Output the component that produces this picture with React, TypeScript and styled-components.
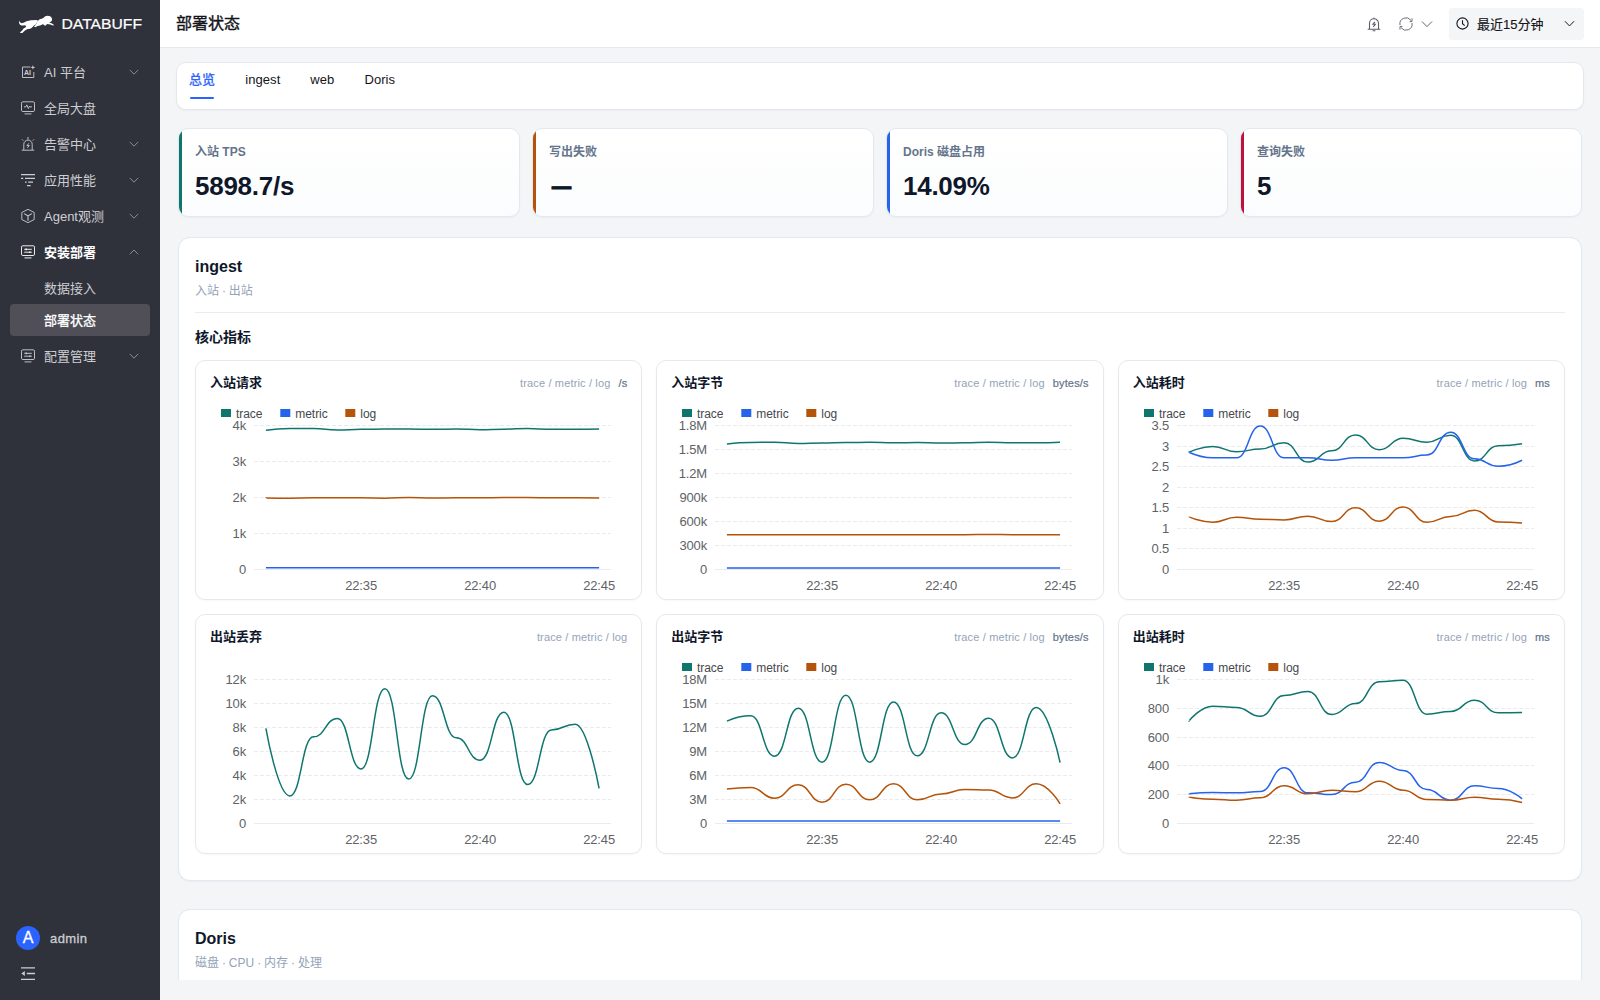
import React from "react";
import styled, { createGlobalStyle } from "styled-components";

const SANS = '"Liberation Sans", "Noto Sans CJK SC", sans-serif';

const GlobalStyle = createGlobalStyle`
  *, *::before, *::after { box-sizing: border-box; }
  html, body { margin: 0; padding: 0; }
  body {
    font-family: ${SANS};
    font-size: 13px;
    color: #0f172a;
    background: #f4f5f7;
    overflow: hidden;
  }
`;

/* ---------- shell ---------- */

const Shell = styled.div`
  display: flex;
  width: 1600px;
  height: 1000px;
  overflow: hidden;
`;

const Sidebar = styled.aside`
  flex: 0 0 160px;
  display: flex;
  flex-direction: column;
  background: #2f323b;
  color: #cdced2;
`;

const Brand = styled.div`
  height: 48px;
  padding: 8px 0 0 18px;
`;

const Nav = styled.nav`
  flex: 1;
  display: flex;
  flex-direction: column;
  padding: 6px 10px 0;
`;

const NavItem = styled.a<{ $open?: boolean }>`
  display: flex;
  align-items: center;
  height: 36px;
  padding: 0 11px 0 10px;
  font-size: 13px;
  line-height: 20px;
  font-weight: ${(p) => (p.$open ? 700 : 400)};
  color: ${(p) => (p.$open ? "#ffffff" : "#cdced2")};

  & > svg:first-child {
    flex: none;
    width: 16px;
    height: 16px;
    margin-right: 8px;
  }
  & > svg:last-child {
    color: #8b8d95;
  }
`;

const NavLabel = styled.span`
  flex: 1;
  padding-top: 2px;
  white-space: nowrap;
`;

const SubList = styled.div`
  display: flex;
  flex-direction: column;
  padding: 2px 0;
`;

const SubItem = styled.a<{ $active?: boolean }>`
  display: flex;
  align-items: center;
  height: 32px;
  padding: 0 0 2px 34px;
  border-radius: 4px;
  font-size: 13px;
  color: ${(p) => (p.$active ? "#ffffff" : "#cdced2")};
  background: ${(p) => (p.$active ? "#504f58" : "transparent")};
  -webkit-text-stroke: ${(p) => (p.$active ? "0.3px currentColor" : "0")};
`;

const UserRow = styled.div`
  display: flex;
  align-items: center;
  gap: 10px;
  height: 24px;
  margin: 0 16px 16px;
  font-size: 13px;
  letter-spacing: 0.4px;
  -webkit-text-stroke: 0.3px currentColor;
`;

const Avatar = styled.span`
  display: flex;
  align-items: center;
  justify-content: center;
  width: 24px;
  height: 24px;
  border-radius: 50%;
  background: #2b63ff;
  color: #fff;
  font-size: 16px;
  letter-spacing: 0;
`;

const Collapse = styled.div`
  height: 34px;
  padding-left: 20px;
  color: #cdced2;
`;

const Main = styled.main`
  flex: 1;
  min-width: 0;
  display: flex;
  flex-direction: column;
  padding-bottom: 20px;
`;

const Header = styled.header`
  flex: 0 0 48px;
  display: flex;
  align-items: center;
  padding: 0 16px;
  background: #fff;
  border-bottom: 1px solid #e8e9ec;
`;

const PageTitle = styled.h1`
  flex: 1;
  margin: 0;
  padding-top: 1px;
  font-size: 16px;
  line-height: 24px;
  font-weight: 400;
  color: #14151a;
  -webkit-text-stroke: 0.4px currentColor;
`;

const HeaderTools = styled.div`
  display: flex;
  align-items: center;
  color: #5c5e66;
`;

const ToolIcon = styled.span<{ $gap: number }>`
  display: flex;
  margin-right: ${(p) => p.$gap}px;
`;

const TimePicker = styled.button`
  display: flex;
  align-items: center;
  width: 135px;
  height: 32px;
  padding: 0 9px 0 7px;
  border: 0;
  border-radius: 4px;
  background: #f4f5f7;
  font-family: inherit;
  font-size: 13px;
  color: #14151a;

  span {
    flex: 1;
    padding: 0 0 1px 7px;
    text-align: left;
    -webkit-text-stroke: 0.15px currentColor;
  }
`;

const Scroll = styled.div`
  flex: 1;
  min-height: 0;
  overflow: hidden;
  padding: 14px 16px 0;
`;

/* ---------- tabs ---------- */

const TabBar = styled.div`
  display: flex;
  gap: 30px;
  height: 48px;
  padding: 0 12px;
  border: 1px solid #e5e9ef;
  border-radius: 10px;
  background: #fff;
  box-shadow: 0 1px 2px rgba(15, 23, 42, 0.04);
`;

const Tab = styled.a<{ $active?: boolean }>`
  display: flex;
  flex-direction: column;
  height: 37px;
  padding-top: 7px;
  font-size: 13px;
  line-height: 20px;
  letter-spacing: 0.08px;
  color: ${(p) => (p.$active ? "#2b63ff" : "#14151a")};
  -webkit-text-stroke: ${(p) => (p.$active ? "0.35px currentColor" : "0")};

  &::after {
    content: "";
    width: 24px;
    height: 2px;
    margin: 7px auto 0;
    border-radius: 1px;
    background: ${(p) => (p.$active ? "#2b63ff" : "transparent")};
  }
`;

/* ---------- summary cards ---------- */

const Content = styled.div`
  padding: 18px 2px 0;
`;

const KpiGrid = styled.div`
  display: grid;
  grid-template-columns: repeat(4, 1fr);
  gap: 12px;
  margin-bottom: 20px;
`;

const KpiCard = styled.div<{ $accent: string }>`
  position: relative;
  height: 89px;
  padding: 13px 16px 0;
  border: 1px solid #e2e8f0;
  border-radius: 10px;
  overflow: hidden;
  background: linear-gradient(180deg, #ffffff 0%, #fbfcfd 100%);
  box-shadow: 0 1px 2px rgba(15, 23, 42, 0.04);

  &::before {
    content: "";
    position: absolute;
    inset: 0 auto 0 0;
    width: 3px;
    background: ${(p) => p.$accent};
  }
`;

const KpiLabel = styled.div`
  font-size: 12px;
  line-height: 20px;
  font-weight: 600;
  color: #64748b;
`;

const KpiValue = styled.div`
  margin-top: 8px;
  font-size: 26px;
  line-height: 32px;
  font-weight: 700;
  letter-spacing: -0.01em;
  color: #0f172a;
`;

const EmptyValue = styled.span`
  display: block;
  padding-left: 2px;
  font-family: "Open Sans", sans-serif;
  font-size: 21px;
  -webkit-text-stroke: 0.8px currentColor;
`;

/* ---------- sections ---------- */

const Section = styled.section`
  margin-bottom: 28px;
  padding: 15px 16px 26px;
  border: 1px solid #e2e8f0;
  border-radius: 12px;
  background: #fff;
  box-shadow: 0 1px 2px rgba(15, 23, 42, 0.04);
`;

const SectionHead = styled.div`
  height: 60px;
  border-bottom: 1px solid #e9edf2;
`;

const SectionTitle = styled.h2`
  margin: 0;
  padding-top: 1px;
  font-size: 16px;
  line-height: 26px;
  font-weight: 700;
`;

const SectionNote = styled.div`
  margin-top: 1px;
  font-size: 12px;
  line-height: 20px;
  word-spacing: -0.4px;
  color: #94a3b8;
`;

const GroupTitle = styled.h3`
  margin: 14px 0 13px;
  font-size: 14px;
  line-height: 20px;
  font-weight: 700;
`;

const ChartGrid = styled.div`
  display: grid;
  grid-template-columns: repeat(3, 1fr);
  gap: 14px;
`;

const Card = styled.article`
  height: 240px;
  padding: 12px 14px 0;
  border: 1px solid #e5e9ef;
  border-radius: 10px;
  background: #fff;
  box-shadow: 0 1px 2px rgba(15, 23, 42, 0.03);
`;

const CardHead = styled.div`
  display: flex;
  align-items: center;
  height: 20px;
  margin-bottom: 7px;
`;

const CardTitle = styled.h4`
  flex: 1;
  margin: 0;
  font-size: 13px;
  line-height: 20px;
  font-weight: 700;
`;

const CardMeta = styled.span<{ $unit?: boolean }>`
  margin-left: ${(p) => (p.$unit ? 8 : 0)}px;
  font-size: 11px;
  letter-spacing: 0.15px;
  line-height: 16px;
  color: ${(p) => (p.$unit ? "#64748b" : "#94a3b8")};
  -webkit-text-stroke: ${(p) => (p.$unit ? "0.2px currentColor" : "0")};
`;

const Plot = styled.svg`
  display: block;
  width: 417px;
  height: 198px;
  overflow: visible;
  font-family: ${SANS};

  .axis { font-size: 13px; fill: #606266; letter-spacing: -0.15px; }
  .legend { font-size: 12px; fill: #46484d; letter-spacing: -0.05px; }
`;

/* ---------- chart ---------- */

const TEAL = "#0f766e";
const BLUE = "#2563eb";
const ORANGE = "#b45309";

const PLOT_LEFT = 44;
const PLOT_RIGHT = 401;
const PLOT_TOP = 25.5;
const PLOT_BOTTOM = 169.5;
const STEP = (PLOT_RIGHT - PLOT_LEFT) / 15;

type Pt = [number, number];

/* Bezier smoothing that stays monotone between samples: tangents are level at each inner point. */
function smoothPath(pts: Pt[], smooth = 0.5): string {
  const last = pts.length - 1;
  let d = `M${pts[0][0]} ${pts[0][1]}`;
  for (let i = 1; i <= last; i++) {
    const [px, py] = pts[i - 1];
    const [x, y] = pts[i];
    const reach = (x - px) * smooth;
    const c0x = i === 1 ? px : px + reach;
    const c1x = i === last ? x : x - reach;
    d += `C${[c0x, py, c1x, y, x, y].map((v) => v.toFixed(2)).join(" ")}`;
  }
  return d;
}

interface Series {
  color: string;
  data: number[];
}

interface ChartSpec {
  title: string;
  unit?: string;
  legend: boolean;
  max: number;
  ticks: string[];
  series: Series[];
}

const LEGEND = [
  { name: "trace", color: TEAL, x: 11 },
  { name: "metric", color: BLUE, x: 70.3 },
  { name: "log", color: ORANGE, x: 135.3 },
];

const TIMES = [
  { label: "22:35", index: 4 },
  { label: "22:40", index: 9 },
  { label: "22:45", index: 14 },
];

const flat = (v: number) => Array<number>(15).fill(v);

const charts: ChartSpec[] = [
  {
    title: "入站请求",
    unit: "/s",
    legend: true,
    max: 4000,
    ticks: ["0", "1k", "2k", "3k", "4k"],
    series: [
      { color: TEAL, data: [3870, 3915, 3920, 3875, 3893, 3905, 3905, 3893, 3900, 3885, 3898, 3915, 3895, 3895, 3905] },
      { color: BLUE, data: flat(48) },
      { color: ORANGE, data: [1988, 1982, 1990, 1990, 1990, 1982, 2000, 1984, 1990, 1990, 1998, 1998, 1990, 1990, 1986] },
    ],
  },
  {
    title: "入站字节",
    unit: "bytes/s",
    legend: true,
    max: 1.8,
    ticks: ["0", "300k", "600k", "900k", "1.2M", "1.5M", "1.8M"],
    series: [
      { color: TEAL, data: [1.57, 1.588, 1.592, 1.574, 1.582, 1.587, 1.591, 1.583, 1.587, 1.58, 1.583, 1.592, 1.585, 1.584, 1.591] },
      { color: BLUE, data: flat(0.02) },
      { color: ORANGE, data: [0.434, 0.434, 0.434, 0.434, 0.434, 0.434, 0.434, 0.434, 0.434, 0.434, 0.434, 0.438, 0.434, 0.434, 0.434] },
    ],
  },
  {
    title: "入站耗时",
    unit: "ms",
    legend: true,
    max: 3.5,
    ticks: ["0", "0.5", "1", "1.5", "2", "2.5", "3", "3.5"],
    series: [
      { color: TEAL, data: [2.85, 2.99, 2.86, 2.93, 3.08, 2.61, 2.885, 3.27, 2.91, 3.19, 3.095, 3.265, 2.64, 3.005, 3.055] },
      { color: BLUE, data: [2.85, 2.715, 2.715, 3.485, 2.715, 2.715, 2.655, 2.715, 2.715, 2.715, 2.78, 3.335, 2.69, 2.51, 2.655] },
      { color: ORANGE, data: [1.28, 1.15, 1.27, 1.22, 1.205, 1.295, 1.165, 1.5, 1.175, 1.52, 1.15, 1.29, 1.44, 1.155, 1.13] },
    ],
  },
  {
    title: "出站丢弃",
    legend: false,
    max: 12,
    ticks: ["0", "2k", "4k", "6k", "8k", "10k", "12k"],
    series: [
      { color: TEAL, data: [7.92, 2.3, 7.22, 8.75, 4.55, 11.22, 3.7, 10.64, 7.14, 5.28, 9.28, 3.25, 7.8, 8.28, 2.92] },
    ],
  },
  {
    title: "出站字节",
    unit: "bytes/s",
    legend: true,
    max: 18,
    ticks: ["0", "3M", "6M", "9M", "12M", "15M", "18M"],
    series: [
      { color: TEAL, data: [12.8, 13.46, 8.42, 14.42, 7.67, 16.04, 7.67, 15.2, 8.46, 13.83, 9.87, 13.17, 8.2, 14.5, 7.6] },
      { color: BLUE, data: flat(0.3) },
      { color: ORANGE, data: [4.3, 4.5, 3.17, 4.83, 2.67, 4.92, 2.96, 4.96, 2.96, 3.7, 4.25, 4.18, 3.2, 4.96, 2.45] },
    ],
  },
  {
    title: "出站耗时",
    unit: "ms",
    legend: true,
    max: 1000,
    ticks: ["0", "200", "400", "600", "800", "1k"],
    series: [
      { color: TEAL, data: [711, 815, 806, 745, 889, 917, 757, 833, 984, 995, 759, 778, 856, 769, 771] },
      { color: BLUE, data: [206, 215, 213, 222, 387, 213, 201, 287, 424, 368, 236, 162, 262, 243, 171] },
      { color: ORANGE, data: [183, 169, 162, 178, 262, 206, 231, 220, 294, 231, 167, 162, 183, 169, 146] },
    ],
  },
];

function LineChart({ spec }: { spec: ChartSpec }) {
  const height = PLOT_BOTTOM - PLOT_TOP;
  const cx = (i: number) => PLOT_LEFT + STEP * (i + 0.5);
  return (
    <Plot viewBox="0 0 417 198">
      {spec.ticks.map((t, i) => {
        const y = Math.round(PLOT_BOTTOM - (height * i) / (spec.ticks.length - 1) - 0.5) + 0.5;
        return (
          <g key={t}>
            <line
              x1={PLOT_LEFT}
              x2={PLOT_RIGHT}
              y1={y}
              y2={y}
              stroke="#e9ebee"
              strokeDasharray={i === 0 ? undefined : "4 2"}
            />
            <text className="axis" x={36} y={y + 4.6} textAnchor="end">
              {t}
            </text>
          </g>
        );
      })}
      {TIMES.map((t) => (
        <text key={t.label} className="axis" x={cx(t.index)} y={190.3} textAnchor="middle">
          {t.label}
        </text>
      ))}
      {spec.legend &&
        LEGEND.map((l) => (
          <g key={l.name}>
            <rect x={l.x} y={9} width={10} height={8} fill={l.color} />
            <text className="legend" x={l.x + 15} y={17.5}>
              {l.name}
            </text>
          </g>
        ))}
      {spec.series.map((s) => (
        <path
          key={s.color}
          d={smoothPath(s.data.map((v, i) => [cx(i), PLOT_BOTTOM - (v / spec.max) * height] as Pt))}
          fill="none"
          stroke={s.color}
          strokeWidth={1.5}
          strokeLinejoin="bevel"
        />
      ))}
    </Plot>
  );
}

/* ---------- icons ---------- */

const Chevron = ({ up, size = 10, w = 1 }: { up?: boolean; size?: number; w?: number }) => (
  <svg width={size} height={size} viewBox="0 0 10 10" fill="none" stroke="currentColor" strokeWidth={w}>
    <path d={up ? "M0.8 7.3 5 3 9.2 7.3" : "M0.8 2.9 5 7.2 9.2 2.9"} />
  </svg>
);

const Icon = ({ children }: { children: React.ReactNode }) => (
  <svg width="16" height="16" viewBox="0 0 16 16" fill="none" stroke="currentColor" strokeWidth="0.9">
    {children}
  </svg>
);

const AiIcon = () => (
  <Icon>
    <path d="M10.4 3H2.5v10.5h11.3V8" />
    <text x="4" y="10.9" fontSize="7" fontWeight="700" fill="currentColor" stroke="none">
      AI
    </text>
    <path d="M12.9 1l.6 1.8 1.8.6-1.8.6-.6 1.8-.6-1.8-1.8-.6 1.8-.6z" fill="currentColor" stroke="none" />
  </Icon>
);

const DashboardIcon = () => (
  <Icon>
    <rect x="1.5" y="1.8" width="13" height="9.7" rx="1.3" />
    <path d="M4 6.9h1.800l1-2 1.600 3.600 1.200-2.400.6.800H12M4.500 13.900h7" />
  </Icon>
);

const AlarmIcon = () => (
  <Icon>
    <path d="M3.8 14V8.3a4.2 4.2 0 0 1 8.4 0V14M1.8 14.2h12.4M8 1v2.6M2 3.4l1.2 1.2M14 3.4l-1.2 1.2" />
    <path d="M8.9 7.3 6.9 9.6h2.4L7.3 11.9" />
  </Icon>
);

const PerfIcon = () => (
  <Icon>
    <path d="M1 2.6h14M1 6.4h2.2M5 6.4h10M5 10.1h1.6M8.2 10.1H13M7 13.6h3.6" strokeWidth="1.1" />
  </Icon>
);

const AgentIcon = () => (
  <Icon>
    <path d="M8 1.3 14.2 4.500v7L8 14.700 1.800 11.500v-7z" strokeLinejoin="round" />
    <path d="M4.2 5.600 8 7.900l3.800-2.300M8 7.900v4.800" strokeWidth="1.100" />
  </Icon>
);

const DeployIcon = () => (
  <Icon>
    <rect x="1.5" y="1.8" width="13" height="9.7" rx="1.3" />
    <path d="M4.2 5.3h7.6M4.2 8.2h7.6M4.5 13.9h7" />
    <path d="M6.2 4.5v1.7M9.8 7.4v1.7" strokeWidth="1.3" />
  </Icon>
);

const CollapseIcon = () => (
  <Icon>
    <path d="M1 1.9h14M6.8 7.5H15M1 13.4h14" strokeWidth="1.3" />
    <path d="M1.4 7.5 4.8 5v5z" fill="currentColor" stroke="none" />
  </Icon>
);

const BellIcon = () => (
  <Icon>
    <path d="M3.5 13V7.3a4.5 4.5 0 0 1 9 0V13M1.7 13.3h12.6M7.3 2.2h1.4M6.6 14.7h2.8" strokeWidth="1.1" />
    <path d="M8.9 5.9 6.9 8.3h2.4L7.3 10.8" strokeWidth="1.1" />
  </Icon>
);

const RefreshIcon = () => (
  <Icon>
    <path d="M2 9A6.1 6.1 0 0 1 13 4.4M14 7A6.1 6.1 0 0 1 3 11.6" />
    <path d="M14 2.4v3.2h-2.4M2 13.6v-3.2h2.4" />
  </Icon>
);

const ClockIcon = () => (
  <svg width="14" height="14" viewBox="0 0 14 14" fill="none" stroke="currentColor" strokeWidth="1.1">
    <circle cx="6.5" cy="6.5" r="5.6" />
    <path d="M6.5 3.2v3.5l2.2 2" />
  </svg>
);

const Logo = () => (
  <svg width="130" height="32" viewBox="0 0 130 32">
    <g transform="translate(-3 0) scale(0.3333)" fill="#fff">
      <path d="M12 37 Q13 45 20 46 Q28 45 34 40 Q46 36 66 36 L69 39 Q64 44 63 49 Q56 52 50 60 Q44 64 38 63 Q30 66 22 75 L15 75 Q16 70 21 68 Q24 61 33 57 Q34 54 30 52 Q20 54 15 50 Q11 45 12 37z" />
      <path d="M64 47 Q66 39 74 34 Q80 32 85 30 Q90 23 98 23 Q107 23 110 29 Q113 34 110 39 Q106 43 102 43 Q110 46 115 49 L116 53 Q106 49 96 48 Q94 53 89 53 Q88 50 83 49 Q76 54 68 54 L61 58 L57 56 Q62 51 64 47z" />
    </g>
    <text
      x="43.5"
      y="21"
      textLength="80.5"
      lengthAdjust="spacingAndGlyphs"
      fontFamily={SANS}
      fontSize="14.2"
      fill="#fff"
      stroke="#fff"
      strokeWidth="0.2"
    >
      DATABUFF
    </text>
  </svg>
);

/* ---------- page ---------- */

const navTop = [
  { label: "AI 平台", icon: <AiIcon />, more: true },
  { label: "全局大盘", icon: <DashboardIcon />, more: false },
  { label: "告警中心", icon: <AlarmIcon />, more: true },
  { label: "应用性能", icon: <PerfIcon />, more: true },
  { label: "Agent观测", icon: <AgentIcon />, more: true },
];

const kpis = [
  { label: "入站 TPS", value: "5898.7/s", accent: "#0f766e" },
  { label: "写出失败", value: null, accent: "#b45309" },
  { label: "Doris 磁盘占用", value: "14.09%", accent: "#2563eb" },
  { label: "查询失败", value: "5", accent: "#be123c" },
];

export default function App() {
  return (
    <>
      <GlobalStyle />
      <Shell>
        <Sidebar>
          <Brand>
            <Logo />
          </Brand>
          <Nav>
            {navTop.map((n) => (
              <NavItem key={n.label}>
                {n.icon}
                <NavLabel>{n.label}</NavLabel>
                {n.more && <Chevron />}
              </NavItem>
            ))}
            <NavItem $open>
              <DeployIcon />
              <NavLabel>安装部署</NavLabel>
              <Chevron up />
            </NavItem>
            <SubList>
              <SubItem>数据接入</SubItem>
              <SubItem $active>部署状态</SubItem>
            </SubList>
            <NavItem>
              <DeployIcon />
              <NavLabel>配置管理</NavLabel>
              <Chevron />
            </NavItem>
          </Nav>
          <UserRow>
            <Avatar>A</Avatar>
            admin
          </UserRow>
          <Collapse>
            <CollapseIcon />
          </Collapse>
        </Sidebar>

        <Main>
          <Header>
            <PageTitle>部署状态</PageTitle>
            <HeaderTools>
              <ToolIcon $gap={16}>
                <BellIcon />
              </ToolIcon>
              <ToolIcon $gap={7}>
                <RefreshIcon />
              </ToolIcon>
              <ToolIcon $gap={16}>
                <Chevron size={12} w={0.8} />
              </ToolIcon>
              <TimePicker>
                <ClockIcon />
                <span>最近15分钟</span>
                <Chevron size={11} w={0.9} />
              </TimePicker>
            </HeaderTools>
          </Header>

          <Scroll>
            <TabBar>
              <Tab $active>总览</Tab>
              <Tab>ingest</Tab>
              <Tab>web</Tab>
              <Tab>Doris</Tab>
            </TabBar>

            <Content>
              <KpiGrid>
                {kpis.map((k) => (
                  <KpiCard key={k.label} $accent={k.accent}>
                    <KpiLabel>{k.label}</KpiLabel>
                    <KpiValue>{k.value ?? <EmptyValue>—</EmptyValue>}</KpiValue>
                  </KpiCard>
                ))}
              </KpiGrid>

              <Section>
                <SectionHead>
                  <SectionTitle>ingest</SectionTitle>
                  <SectionNote>入站 · 出站</SectionNote>
                </SectionHead>
                <GroupTitle>核心指标</GroupTitle>
                <ChartGrid>
                  {charts.map((c) => (
                    <Card key={c.title}>
                      <CardHead>
                        <CardTitle>{c.title}</CardTitle>
                        <CardMeta>trace / metric / log</CardMeta>
                        {c.unit && <CardMeta $unit>{c.unit}</CardMeta>}
                      </CardHead>
                      <LineChart spec={c} />
                    </Card>
                  ))}
                </ChartGrid>
              </Section>

              <Section>
                <SectionHead>
                  <SectionTitle>Doris</SectionTitle>
                  <SectionNote>磁盘 · CPU · 内存 · 处理</SectionNote>
                </SectionHead>
              </Section>
            </Content>
          </Scroll>
        </Main>
      </Shell>
    </>
  );
}
